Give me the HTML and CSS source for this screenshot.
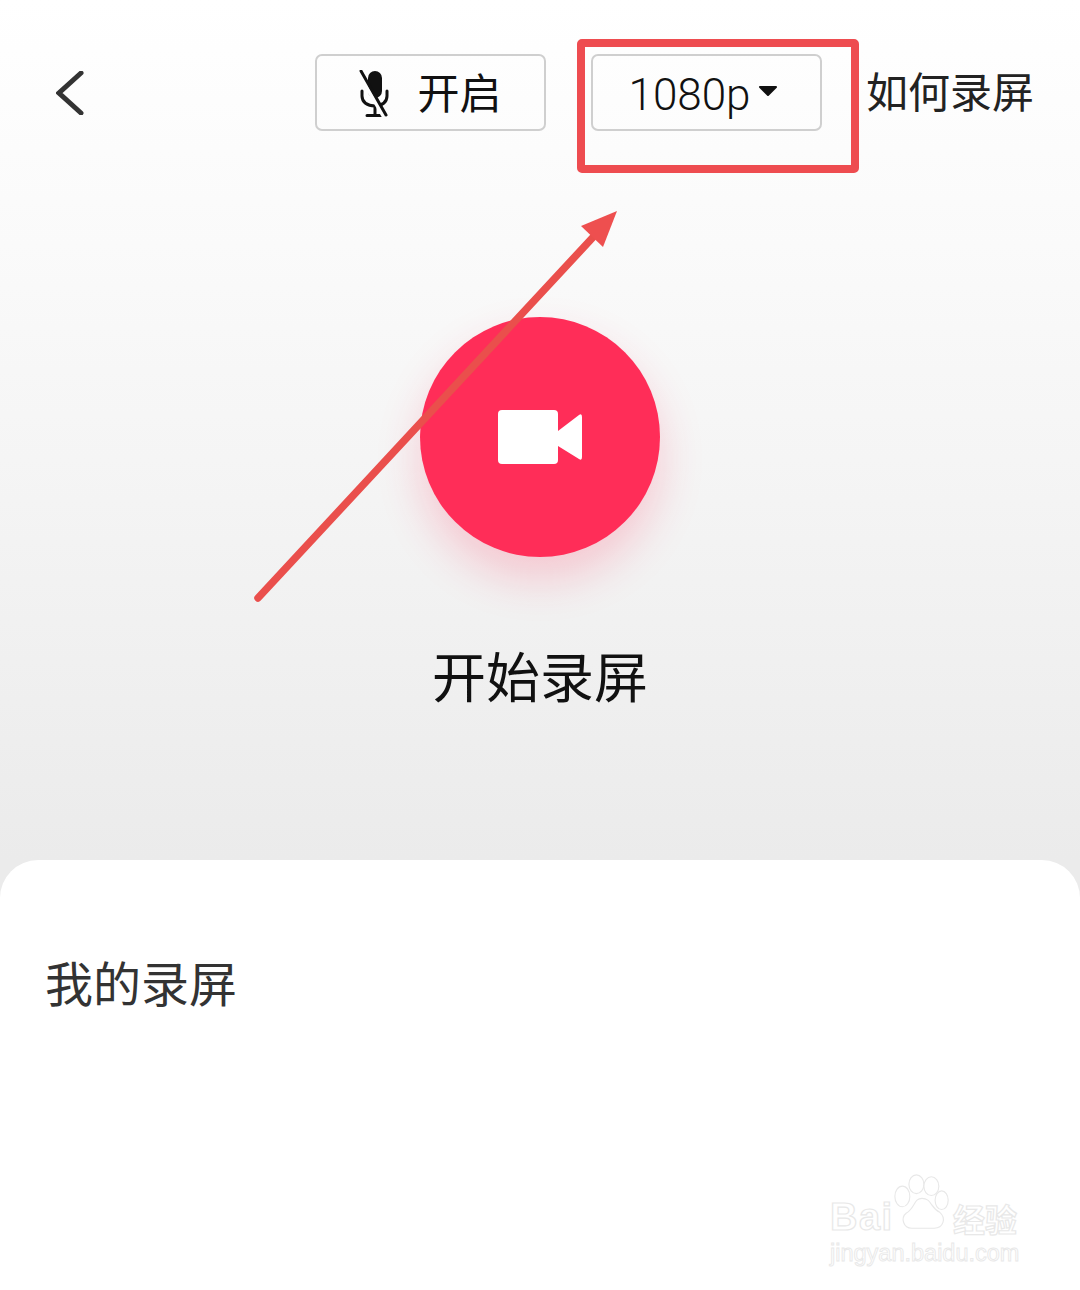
FILE: index.html
```html
<!DOCTYPE html>
<html lang="zh-CN">

<head>
    <meta charset="UTF-8">
    <meta name="viewport" content="width=device-width, initial-scale=1.0">
    <title>开始录屏</title>
    <link rel="stylesheet" href="styles.css">
</head>

<body>
    <div class="page">
        <div class="stage">
            <div class="toolbar">
                <svg class="back-icon" width="28" height="44" viewBox="0 0 28 44">
                    <path d="M25 2 L3 22 L25 42" />
                </svg>
                <div class="tool-button mic-button">
                    <svg class="mic-icon" width="30" height="48" viewBox="0 0 30 48">
                        <rect class="mic-capsule" x="9" y="1" width="14" height="27" rx="7" />
                        <path class="mic-line" d="M3 21 V26 C3 32 8 36 16 36 C23 36 28 32 28 26 V21" />
                        <path class="mic-line" d="M16 36 V45 M8 45.500 H24" />
                        <path class="mic-gap" d="M0 4 L25 47" />
                        <path class="mic-line" d="M2 1 L27 45" />
                    </svg>
                    <span class="mic-text">开启</span>
                </div>
                <div class="tool-button res-button">
                    <span class="res-text">1080p</span>
                    <svg class="res-caret" width="20" height="12" viewBox="0 0 20 12">
                        <path d="M2 2 H18 L10 10 Z" />
                    </svg>
                </div>
                <span class="help-link">如何录屏</span>
            </div>

            <div class="record-button">
                <svg width="84" height="54" viewBox="0 0 84 54">
                    <rect x="0" y="0" width="60" height="54" rx="4" fill="#fff" />
                    <path d="M60 21 L81 5 Q84 3 84 7 V47 Q84 51 81 49 L60 36 Z" fill="#fff" />
                </svg>
            </div>
            <div class="record-label">开始录屏</div>
        </div>

        <div class="sheet">
            <h2 class="sheet-title">我的录屏</h2>
        </div>

        <!-- annotation drawn over the screenshot -->
        <div class="highlight-box"></div>
        <svg class="arrow" width="1080" height="640" viewBox="0 0 1080 640">
            <path class="arrow-line" d="M258 598 L596 234" />
            <path class="arrow-head" d="M617 211 L581 226 L603 247 Z" />
        </svg>

        <div class="watermark">
            <div class="wm-row">
                <span class="wm-bai">Bai</span>
                <svg class="wm-paw" width="58" height="58" viewBox="0 0 62 62">
                    <ellipse cx="10" cy="24" rx="8" ry="11" />
                    <ellipse cx="25" cy="11" rx="8" ry="10" />
                    <ellipse cx="41" cy="13" rx="8" ry="10" />
                    <ellipse cx="52" cy="28" rx="7" ry="10" />
                    <path d="M31 26 C22 26 24 36 14 42 C8 47 11 58 20 58 H44 C54 58 57 47 50 41 C40 36 41 26 31 26 Z" />
                    <text x="31" y="53" class="wm-du">du</text>
                </svg>
                <span class="wm-cn">经验</span>
            </div>
            <div class="wm-url">jingyan.baidu.com</div>
        </div>
    </div>
</body>

</html>
```

FILE: styles.css
```css
html,
body {
    margin: 0;
    padding: 0;
}

body {
    font-family: "Noto Sans CJK SC", "Noto Sans", sans-serif;
    background: #ffffff;
    color: #111111;
}

.page {
    position: relative;
    width: 1080px;
    height: 1290px;
    overflow: hidden;
    background: #ffffff;
}

.stage {
    height: 900px;
    box-sizing: border-box;
    padding-top: 54px;
    display: flex;
    flex-direction: column;
    align-items: center;
    background: linear-gradient(180deg, #ffffff 0, #fbfbfb 200px, #f4f4f4 500px, #ebebeb 860px);
}

.toolbar {
    width: 100%;
    box-sizing: border-box;
    padding: 0 46px 0 56px;
    display: flex;
    align-items: flex-start;
}

.back-icon {
    margin-top: 17px;
    margin-right: auto;
}

.back-icon path {
    fill: none;
    stroke: #333333;
    stroke-width: 5;
    stroke-linecap: round;
    stroke-linejoin: miter;
}

.tool-button {
    width: 231px;
    height: 77px;
    box-sizing: border-box;
    border: 2px solid #cfcfcf;
    border-radius: 7px;
    display: flex;
    align-items: center;
    justify-content: center;
}

.mic-button {
    gap: 28px;
    font-size: 42px;
    margin-right: 45px;
}

.mic-icon {
    margin-top: 2px;
}

.mic-text {
    margin-top: -4px;
}

.mic-capsule {
    fill: #111111;
}

.mic-line {
    fill: none;
    stroke: #111111;
    stroke-width: 3;
    stroke-linecap: round;
}

.mic-gap {
    fill: none;
    stroke: #fdfdfd;
    stroke-width: 4;
}

.res-button {
    margin-right: 44px;
    padding-right: 7px;
    gap: 7px;
}

.res-text {
    font-family: Roboto, "Noto Sans", sans-serif;
    font-size: 44px;
    font-weight: 300;
    line-height: 77px;
    margin-top: 5px;
}

.res-caret {
    margin-top: -4px;
}

.res-caret path {
    fill: #111111;
    stroke: #111111;
    stroke-width: 2;
    stroke-linejoin: round;
}

.help-link {
    font-size: 42px;
    line-height: 72px;
    color: #222222;
}

.record-button {
    width: 240px;
    height: 240px;
    margin-top: 186px;
    border-radius: 50%;
    background: #ff2d58;
    box-shadow: 0 22px 44px rgba(255, 45, 88, 0.22);
    display: flex;
    align-items: center;
    justify-content: center;
}

.record-label {
    margin-top: 80px;
    font-size: 54px;
    line-height: 76px;
    color: #111111;
}

.sheet {
    position: relative;
    height: 430px;
    margin-top: -40px;
    box-sizing: border-box;
    padding: 86px 45px 0;
    background: #ffffff;
    border-radius: 38px 38px 0 0;
}

.sheet-title {
    margin: 0;
    font-size: 48px;
    font-weight: 400;
    line-height: 70px;
    color: #333333;
}

.highlight-box {
    position: absolute;
    left: 577px;
    top: 39px;
    width: 282px;
    height: 134px;
    box-sizing: border-box;
    border: 8px solid #ee4c50;
    border-radius: 5px;
}

.arrow {
    position: absolute;
    left: 0;
    top: 0;
}

.arrow-line {
    fill: none;
    stroke: #ea4f4c;
    stroke-width: 7.5;
    stroke-linecap: round;
}

.arrow-head {
    fill: #ee4f4f;
}

.watermark {
    position: absolute;
    left: 829px;
    top: 1174px;
    width: 200px;
    color: transparent;
    -webkit-text-stroke: 1.2px #e8e8e8;
}

.wm-row {
    display: flex;
    align-items: flex-end;
    height: 58px;
}

.wm-bai {
    font-family: "Liberation Sans", sans-serif;
    font-size: 38px;
    font-weight: 700;
    line-height: 40px;
    letter-spacing: 1.5px;
    width: 63px;
    margin-left: 1px;
    margin-bottom: -5px;
}

.wm-paw {
    flex: none;
}

.wm-paw ellipse,
.wm-paw path {
    fill: #ffffff;
    stroke: #e8e8e8;
    stroke-width: 1.2;
}

.wm-du {
    font-family: "Liberation Sans", sans-serif;
    font-size: 21px;
    text-anchor: middle;
    fill: transparent;
}

.wm-cn {
    margin-left: 2px;
    margin-bottom: -4px;
    font-size: 32px;
    line-height: 36px;
    font-weight: 700;
}

.wm-url {
    font-family: "Liberation Sans", sans-serif;
    font-size: 23.5px;
    line-height: 28px;
    margin-top: 7px;
    margin-left: 1px;
    -webkit-text-stroke-width: 0.9px;
}
```
